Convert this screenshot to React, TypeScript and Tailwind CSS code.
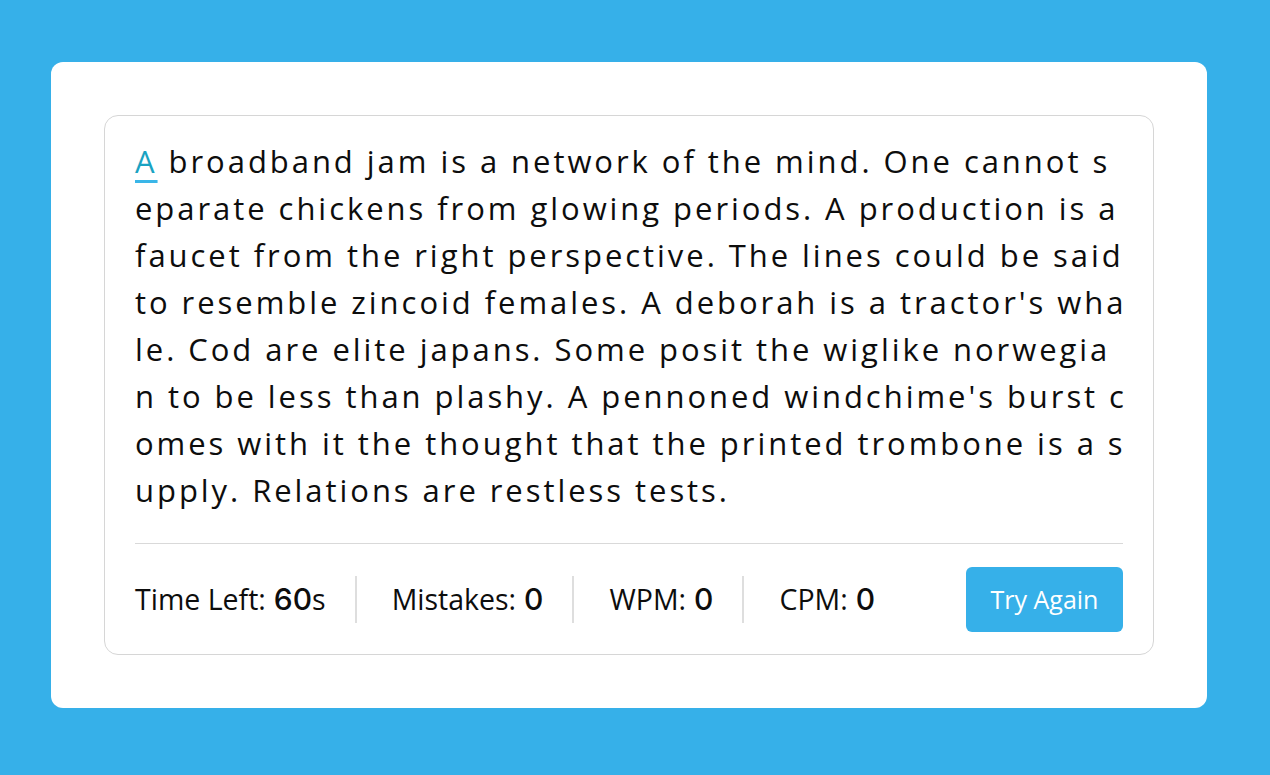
const lines = [
  "broadband jam is a network of the mind. One cannot s",
  "eparate chickens from glowing periods. A production is a",
  "faucet from the right perspective. The lines could be said",
  "to resemble zincoid females. A deborah is a tractor's wha",
  "le. Cod are elite japans. Some posit the wiglike norwegia",
  "n to be less than plashy. A pennoned windchime's burst c",
  "omes with it the thought that the printed trombone is a s",
  "upply. Relations are restless tests.",
];

const stats = [
  { label: "Time Left:", value: "60", unit: "s" },
  { label: "Mistakes:", value: "0" },
  { label: "WPM:", value: "0" },
  { label: "CPM:", value: "0" },
];

export default function App() {
  return (
    <div
      className="w-[1270px] h-[775px] bg-[#36b0e9] pt-[62px] pl-[51px]"
      style={{ fontFamily: '"Open Sans", "Liberation Sans", sans-serif' }}
    >
      <div className="w-[1156px] bg-white rounded-[12px] p-[53px]">
        <div className="border border-[#d6d6d6] rounded-[14px] px-[30px] pt-[22px] pb-[22px]">
          <div className="text-[31px] leading-[47px] tracking-[2.95px] text-[#0d0d0d] mb-[29px]">
            {lines.map((line, i) => (
              <div key={i} className="whitespace-pre">
                {i === 0 && (
                  <>
                    <span className="text-[#1aa3c2] underline decoration-[#3ab6e8] decoration-[3px] underline-offset-[7px]">
                      A
                    </span>{" "}
                  </>
                )}
                {line}
              </div>
            ))}
          </div>
          <div className="h-px bg-[#d9d9d9]" />
          <div className="flex items-center justify-between pt-[23px]">
            <ul className="flex items-center text-[28.5px] text-[#0d0d0d]">
              {stats.map((s, i) => (
                <li
                  key={s.label}
                  className={
                    i === 0
                      ? "h-[47px] flex items-center pr-[29px]"
                      : "h-[47px] flex items-center pl-[35px] pr-[29px] border-l-2 border-[#dedede]"
                  }
                >
                  <span>{s.label}</span>
                  <b className="ml-[8px] text-[30px] font-medium font-[Inter,sans-serif]">{s.value}</b>
                  {s.unit && <span>{s.unit}</span>}
                </li>
              ))}
            </ul>
            <button className="w-[157px] h-[65px] rounded-[6px] bg-[#36b0e9] text-white text-[25px]">
              Try Again
            </button>
          </div>
        </div>
      </div>
    </div>
  );
}
